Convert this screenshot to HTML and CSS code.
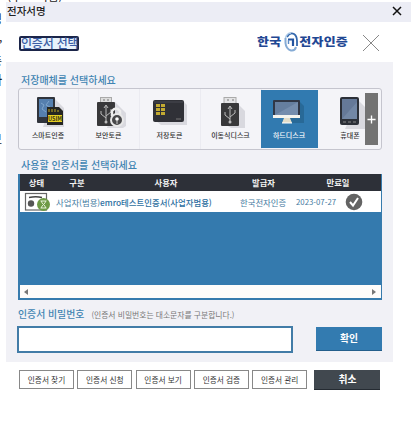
FILE: index.html
```html
<!DOCTYPE html>
<html lang="ko">
<head>
<meta charset="utf-8">
<title>전자서명</title>
<link rel="stylesheet" href="styles.css">
</head>
<body>
<div class="backdrop">
  <span class="frag top">(주 고객님)</span>
  <span class="frag f1">경</span>
  <span class="frag f2">,</span>
  <span class="frag f3">증</span>
  <span class="frag f4">하</span>
  <span class="frag f5">보</span>
</div>
<main class="dialog">
  <header class="titlebar">
    <span>전자서명</span>
    <svg class="close" viewBox="0 0 10 10"><path d="M1 1l8 8M9 1L1 9"/></svg>
  </header>
  <section class="brand">
    <h1>인증서 선택</h1>
    <div class="logo">
      <b>한국</b>
      <svg viewBox="0 0 14 20"><path d="M3 5Q6 0 10 2Q13 4 13 9V14" stroke="#3468ad" stroke-width="1.800"/><path d="M1.500 6Q3 1 7 1" stroke="#a9c7e6" stroke-width="1.500"/><path d="M1.500 6V11Q2 17 7 18.500Q11 19 12 15" stroke="#85abd5" stroke-width="2"/><path d="M4 7.500H9V14" stroke="#2454a0" stroke-width="2.200"/><path d="M4.500 8V12" stroke="#5c8bc5" stroke-width="1.400"/></svg>
      <b>전자인증</b>
    </div>
    <svg class="dismiss" viewBox="0 0 18 18"><path d="M1 1l16 16M17 1L1 17"/></svg>
  </section>
  <section class="panel">
    <h2>저장매체를 선택하세요</h2>
    <div class="media">
      <div class="item first">
        <svg viewBox="-2 0 34 34"><path class="shadow" d="M20 2L31 13V32H10z"/><rect x="4" y="2" width="18" height="26" rx="1" fill="#30343c"/><rect x="6" y="4" width="14" height="18" fill="#557fae"/><path d="M8 8l3 2-2 4 4 3M16 6l-3 4 4 2" stroke="#7fa5cc" fill="none"/><path d="M14 12H26L30 16V30H14z" fill="#252522"/><rect x="15" y="20" width="14" height="7" fill="#e4ce22"/><text x="22" y="25.600" font-size="5.500" text-anchor="middle" font-weight="700" fill="#3c3516">USIM</text><path d="M16 14v3M19 14v3M22 14v3M25 15v2" stroke="#c5ab24"/></svg>
        <span>스마트인증</span>
      </div>
      <div class="item">
        <svg viewBox="-3 0 34 34"><path class="shadow" d="M20 7L31 18V31L28 33H12z"/><rect x="5.500" y="2.500" width="11" height="6" fill="#ddd" stroke="#aaa"/><path d="M8 5h2M12 5h2" stroke="#777"/><rect x="2" y="7" width="18" height="24" rx="1" fill="#38383a"/><path d="M11 26V11M9 13l2-3 2 3M11 23l-5-4v-3M11 21l5-4v-3" stroke="#bbb" fill="none"/><circle cx="11" cy="27" r="1.500" fill="#bbb"/><path d="M17 21v-5q4-5 8 0v5" fill="none" stroke="#eee" stroke-width="2.500"/><circle cx="22" cy="25" r="6" fill="#48484a" stroke="#e8e8e8" stroke-width="2"/><circle cx="22" cy="24" r="1.800" fill="#fff"/><path d="M22 25v4" stroke="#ccc"/></svg>
        <span>보안토큰</span>
      </div>
      <div class="item">
        <svg viewBox="1 0 34 34"><path class="shadow" d="M31 6L35 10V30H9L4 26z"/><rect x="1" y="5" width="31" height="22" rx="2" fill="#303137"/><path d="M2 7H31" stroke="#484a52"/><path d="M4 9h4v3H4zM9 9h4v3H9zM4 13h4v3H4zM9 13h4v3H9zM4 17h4v3H4zM9 17h4v3H9z" fill="#c2aa32"/><path d="M24 24h5" stroke="#777"/></svg>
        <span>저장토큰</span>
      </div>
      <div class="item">
        <svg viewBox="0 0 34 34"><path class="shadow" d="M22 7L31 16V33H17L9 28z"/><rect x="10" y="2.500" width="12" height="6" fill="#e3e3e5" stroke="#aaa"/><path d="M13 5h2M18 5h2" stroke="#777"/><rect x="7" y="8" width="18" height="23" rx="1" fill="#38383a"/><path d="M16 27V12M14 14l2-3 2 3M16 24l-5-4v-3M16 22l5-4v-3" stroke="#bbb" fill="none"/><circle cx="16" cy="27" r="1.500" fill="#bbb"/></svg>
        <span>이동식디스크</span>
      </div>
      <div class="item selected">
        <svg viewBox="2 0 34 34"><path d="M30 7L34 11V28H11z" fill="#286997"/><rect x="3" y="5" width="27" height="17" rx="1" fill="#303746"/><rect x="5" y="7" width="23" height="13" fill="#657e9f"/><path d="M5 20L28 7V20z" fill="#758dad"/><path d="M3 20h27v3H3z" fill="#f5f4ee"/><path d="M14 23h6l2 5H12z" fill="#e3ddc9"/><path d="M12 28h10" stroke="#fff"/></svg>
        <span>하드디스크</span>
      </div>
      <div class="item last">
        <svg viewBox="-2 0 34 34"><path class="shadow" d="M23 5L33 15V34H10z"/><rect x="5" y="2" width="19" height="28" rx="2" fill="#2c3038"/><rect x="7" y="4" width="15" height="20" fill="#657998"/><path d="M7 24L22 7V24z" fill="#7287a5"/><path d="M8 27h3M13 27h3M18 27h3" stroke="#888"/></svg>
        <span>휴대폰</span>
      </div>
      <div class="more"><svg viewBox="0 0 10 10"><path d="M5 .5v9M.5 5h9"/></svg></div>
    </div>
    <h2 class="second">사용할 인증서를 선택하세요</h2>
    <div class="certs">
      <div class="row head"><span>상태</span><span>구분</span><span>사용자</span><span>발급자</span><span>만료일</span></div>
      <div class="row cert">
        <svg class="state" viewBox="0 0 28 20"><rect x="1.500" y="1.500" width="21" height="16.500" fill="#fff" stroke="#666" stroke-width="1.200"/><path d="M5 5.500q7-1.500 13 0" stroke="#444" stroke-width="1.500" fill="none"/><circle cx="7" cy="11.500" r="3.200" fill="#555"/><circle cx="19.500" cy="12.500" r="6.500" fill="#6d9a45"/><path d="M16.500 9h6M16.500 16h6M17.500 9q0 2 2 3.500q2-1.500 2-3.500M17.500 16q0-2 2-3.500q2 1.500 2 3.500" stroke="#e4f0d8" fill="none"/></svg>
        <span class="kind">사업자(범용)</span>
        <b class="user">emro테스트인증서(사업자범용)</b>
        <span class="issuer">한국전자인증</span>
        <span class="date">2023-07-27</span>
        <svg class="check" viewBox="0 0 18 18"><circle cx="9" cy="9" r="8.300" fill="#636363"/><path d="M5 9l3 3.500L13 5" stroke="#fff" stroke-width="2" fill="none"/></svg>
      </div>
      <div class="empty"></div>
      <div class="scroll"><i class="left"></i><i class="right"></i></div>
    </div>
    <div class="pwlabel"><label for="pw">인증서 비밀번호</label><small>(인증서 비밀번호는 대소문자를 구분합니다.)</small></div>
    <div class="pwrow"><input id="pw" type="password"><button class="ok">확인</button></div>
  </section>
  <footer>
    <button>인증서 찾기</button><button>인증서 신청</button><button>인증서 보기</button><button>인증서 검증</button><button>인증서 관리</button><button class="cancel">취소</button>
  </footer>
</main>
</body>
</html>
```
FILE: styles.css
```css
* { box-sizing: border-box; }
body { margin: 0; width: 411px; height: 445px; overflow: hidden; background: #fff; color: #222; font-family: "Noto Sans CJK KR", sans-serif; white-space: nowrap; }
svg { display: block; flex: none; }
h1, h2 { margin: 0; }
button { padding: 0; font-family: inherit; }
.backdrop { position: absolute; inset: 0; overflow: hidden; }
.frag { position: absolute; left: -9px; font-size: 12px; line-height: 14px; color: #222; }
.top { left: 7px; top: -11px; }
.f1 { top: 12px; }
.f2 { left: -1px; top: 30px; }
.f3 { top: 54px; }
.f4 { top: 73px; font-weight: 700; }
.f5 { top: 132px; }
.dialog { position: relative; margin-left: 6px; padding-top: 2px; }
.titlebar { height: 20px; background: #ecedf5; display: flex; align-items: center; justify-content: space-between; padding: 0 9px 2px 1px; font-size: 10.5px; line-height: 18px; font-weight: 500; color: #222; }
.close { width: 10px; height: 10px; stroke: #111; stroke-width: 1.5; fill: none; }
.brand { height: 40px; background: #fff; display: flex; align-items: center; padding: 0 31px 0 13px; }
h1 { width: 60px; height: 15px; border: 2px solid #1b2549; border-radius: 2px; background: #e8f2fb; font-size: 12px; line-height: 9px; font-weight: 500; color: #3b5ea5; margin-top: 2px; letter-spacing: -.2px; }
.logo { display: flex; align-items: center; margin-left: auto; color: #1f4793; font-size: 13px; line-height: 20px; }
.logo b { transform: scaleY(.85); font-weight: 900; letter-spacing: .2px; }
.logo svg { width: 14px; height: 20px; margin: 0 1px 0 3px; fill: none; }
.dismiss { width: 18px; height: 18px; margin: 2px 0 0 14px; stroke: #888; fill: none; }
.panel { width: 387px; height: 300px; background: #f1f1f6; padding: 11px 11px 0 12px; }
h2 { font-size: 10px; line-height: 13px; font-weight: 500; color: #3f84b2; margin: 0 0 2px 3px; }
.media { height: 62px; border: 1px solid #c5c5ce; border-radius: 3px; background: #f4f4f8; display: flex; position: relative; }
.item { width: 61px; height: 60px; display: flex; flex-direction: column; align-items: center; padding: 6px 1px 0 0; border-right: 1px solid #ebebf1; font-size: 7px; line-height: 9px; font-weight: 500; color: #333; flex: none; }
.item.first { width: 60px; }
.item svg { width: 34px; height: 34px; margin-bottom: 2px; overflow: visible; }
.shadow { fill: #d9d9df; }
.selected { width: 57px; background: #317ab0; color: #fff; border: 0; margin: 1px 0 0 -1px; height: 58px; padding-top: 5px; }
.last { width: 65px; border: 0; }
.more { position: absolute; left: 346px; top: 4px; width: 13px; height: 52px; background: #737373; display: grid; place-items: center; }
.more svg { width: 9px; height: 9px; stroke: #fff; stroke-width: 1.5; }
h2.second { margin: 8px 0 3px 3px; }
.certs { height: 126px; border: 2px solid #377bad; border-right-width: 1px; border-top: 0; }
.row { display: grid; align-items: center; }
.head { grid-template-columns: 33px 48px 130px 65px 1fr; height: 17px; background: #2d3038; color: #f2f2f2; font-size: 8.3px; font-weight: 700; text-align: center; line-height: 15px; }
.head span:last-child { padding-right: 1px; }
.cert { grid-template-columns: 36px 44px 140px 56px 48px 1fr; height: 21px; background: #fff; color: #467ba1; font-size: 8.4px; line-height: 12px; }
.state { width: 28px; height: 20px; margin-left: 4px; }
.user { color: #2d6f9f; font-weight: 500; }
.date { font-size: 7.8px; }
.check { width: 18px; height: 18px; margin-left: 1px; }
.empty { height: 73px; background: #347aae; }
.scroll { height: 13px; background: #fefcfa; display: flex; justify-content: space-between; align-items: center; padding: 0 5px 0 4px; }
.scroll i { border: 3px solid transparent; }
.scroll .left { border-left: 0; border-right: 4px solid #777; }
.scroll .right { border-right: 0; border-left: 4px solid #777; }
.pwlabel { display: flex; align-items: center; height: 26px; padding-top: 2px; color: #3f84b2; font-size: 9.9px; font-weight: 500; gap: 7px; }
.pwlabel small { color: #777; font-size: 7.8px; font-weight: 400; padding-top: 1px; }
.pwrow { display: flex; align-items: center; justify-content: space-between; }
input { width: 276px; height: 27px; border: 2px solid #427ca7; background: #fff; padding: 2px; margin-left: -1px; }
.ok { width: 66px; height: 24px; border: 0; border-bottom: 1px solid #235e8b; background: #337bb0; color: #fff; font-size: 9.8px; line-height: 20px; font-weight: 700; margin-top: -2px; }
footer { display: flex; gap: 3.3px; padding: 8px 0 0 13px; }
footer button { width: 55px; height: 19px; border: 1px solid #888; background: #fff; color: #333; font-size: 7.7px; line-height: 15px; }
footer .cancel { width: 66px; height: 20px; margin-left: 4px; border: 0; border-bottom: 1px solid #252b32; background: #41484f; color: #fff; font-size: 9.8px; font-weight: 700; }
```
